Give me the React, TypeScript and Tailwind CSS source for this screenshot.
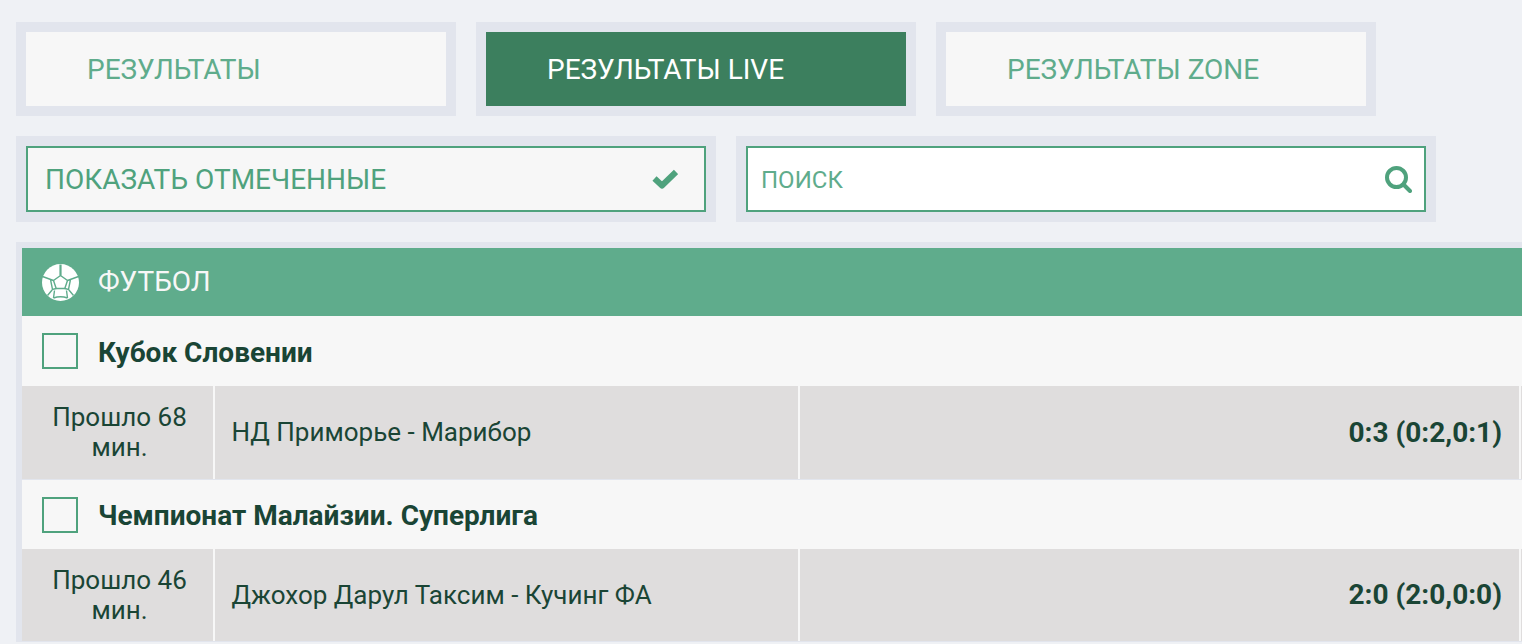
import React from "react";

const tabs = [
  { label: "РЕЗУЛЬТАТЫ", active: false },
  { label: "РЕЗУЛЬТАТЫ LIVE", active: true },
  { label: "РЕЗУЛЬТАТЫ ZONE", active: false },
];

const leagues = [
  {
    name: "Кубок Словении",
    minutes: "Прошло 68 мин.",
    match: "НД Приморье - Марибор",
    score: "0:3 (0:2,0:1)",
    rowClass: "h-[70px] pl-5 flex items-center gap-5 bg-[#f7f7f7]",
    nameClass: "pt-1 text-[28px] font-bold text-[#1a4535]",
    cellsClass: "h-[93px] flex text-[#1a4535] text-[26px] bg-[#f7f7f7]",
    minutesClass: "w-[191px] pb-0.5 pl-[26px] pr-[22px] flex items-center justify-center text-center leading-[30px] bg-[#dfdddd]",
  },
  {
    name: "Чемпионат Малайзии. Суперлига",
    minutes: "Прошло 46 мин.",
    match: "Джохор Дарул Таксим - Кучинг ФА",
    score: "2:0 (2:0,0:0)",
    rowClass: "h-[69px] pl-5 flex items-center gap-5 bg-[#f7f7f7]",
    nameClass: "pt-0.5 text-[28px] font-bold text-[#1a4535]",
    cellsClass: "h-[92px] flex text-[#1a4535] text-[26px] bg-[#f7f7f7]",
    minutesClass: "w-[191px] pl-[26px] pr-[22px] flex items-center justify-center text-center leading-[30px] bg-[#dfdddd]",
  },
];

// white ball with thin seams, drawn from the center pentagon outwards
const Ball = () => (
  <svg width="37" height="37" viewBox="-18.5 -18.5 37 37" className="shrink-0">
    <circle r="18.5" fill="#ffffff" />
    <g fill="none" stroke="#5fac8c" strokeWidth="1.4">
      <path d="M0-7 7-2 4.300 6H-4.300L-7-2Z" />
      <path d="M0-7V-18" strokeWidth="2.200" />
      <path d="M7-2 18-6M10-3 8 7 4.300 6M8 7 13 13" />
      <path d="M-7-2-18-6M-10-3-8 7-4.300 6M-8 7-13 13" />
      <path d="M-7 15.500Q0 13 7 15.500M-6 8-7 15.500M6 8 7 15.500" />
    </g>
  </svg>
);

const App = () => {
  return (
    <div className="w-[1522px] h-[644px] overflow-hidden bg-[#eff1f5] pt-[22px] pl-4 font-['Roboto',sans-serif]">
      <div className="flex gap-5">
        {tabs.map((tab) => (
          <div key={tab.label} className="w-[440px] h-[94px] p-2.5 bg-[#e2e5ed]">
            <div
              className={
                tab.active
                  ? "h-full pl-[61px] pt-0.5 flex items-center text-[28px] text-white bg-[#3c7f5e]"
                  : "h-full pl-[61px] pt-0.5 flex items-center text-[28px] text-[#5fac8c] bg-[#f7f7f7]"
              }
            >
              {tab.label}
            </div>
          </div>
        ))}
      </div>

      <div className="flex gap-5 mt-5">
        <div className="w-[700px] h-[86px] p-2.5 bg-[#e2e5ed]">
          <div className="h-full pl-[17px] pr-[26px] flex items-center justify-between border-2 border-[#4fa27d] bg-[#f7f7f7] text-[28px] text-[#4fa27d]">
            <span className="pt-0.5">ПОКАЗАТЬ ОТМЕЧЕННЫЕ</span>
            <svg width="26" height="20" viewBox="0 0 26 20" fill="none" stroke="#4fa27d" strokeWidth="6" strokeLinejoin="round">
              <path d="M2.500 9.500 10 16.500 24 3" />
            </svg>
          </div>
        </div>
        <div className="w-[700px] h-[86px] p-2.5 bg-[#e2e5ed]">
          <div className="h-full pl-[13px] pr-3 flex items-center justify-between border-2 border-[#4fa27d] bg-white text-[24px] text-[#5fac8c]">
            <span className="pt-0.5">ПОИСК</span>
            <svg width="27" height="27" viewBox="0 0 27 27" fill="none" stroke="#4fa27d" strokeWidth="4">
              <circle cx="11.500" cy="11.500" r="9.500" />
              <path d="M18.500 18.500 25 25" strokeLinecap="round" />
            </svg>
          </div>
        </div>
      </div>

      <div className="mt-5 pl-1.5 pt-1.5 bg-[#e2e5ed]">
        <div className="h-[68px] pl-5 flex items-center gap-[19px] bg-[#5fac8c] text-[28px] text-[#f7f7f7]">
          <Ball />
          <span>ФУТБОЛ</span>
        </div>
        {leagues.map((league) => (
          <div key={league.name} className="pb-px">
            <div className={league.rowClass}>
              <div className="w-9 h-9 border-2 border-[#4fa27d]" />
              <span className={league.nameClass}>{league.name}</span>
            </div>
            <div className={league.cellsClass}>
              <div className={league.minutesClass}>{league.minutes}</div>
              <div className="ml-0.5 w-[583px] pl-[16.5px] flex items-center bg-[#dfdddd]">
                {league.match}
              </div>
              <div className="ml-0.5 w-[719px] pr-[17px] flex items-center justify-end text-[28px] font-bold bg-[#dfdddd]">
                {league.score}
              </div>
              <div className="ml-0.5 flex-1 bg-[#dfdddd]" />
            </div>
          </div>
        ))}
      </div>
    </div>
  );
};

export default App;
